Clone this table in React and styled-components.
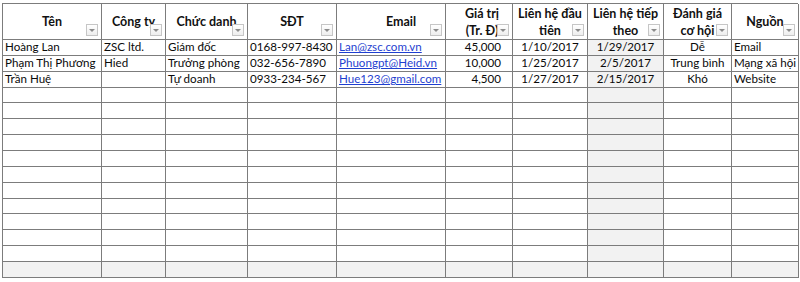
import React from 'react';
import styled, { createGlobalStyle } from 'styled-components';

const GlobalStyle = createGlobalStyle`
    body {
        margin: 0;
        background: #ffffff;
        font-family: Lato, "Open Sans", "Liberation Sans", sans-serif;
    }
`;

// --- layout ---

const COLS = [99, 64, 82, 89, 109, 67, 75, 76, 68, 67];

const Sheet = styled.div`
    display: grid;
    grid-template-columns: ${COLS.map((w) => `${w}px`).join(' ')};
    grid-template-rows: 36px repeat(15, 15.87px);
    margin: 3px 0 0 2px;
    width: 796px;
    border-left: 1px solid #7c7c7c;
    border-top: 1px solid #7c7c7c;
    box-sizing: border-box;
`;

const HeadCell = styled.div`
    position: relative;
    display: flex;
    flex-direction: column;
    align-items: center;
    justify-content: center;
    padding: 0 ${(p) => p.$pr || 0}px 0 ${(p) => p.$pl || 0}px;
    border-right: 1px solid #7c7c7c;
    border-bottom: 1px solid #7c7c7c;
    background: #ffffff;
    font-weight: 700;
    font-size: 12.5px;
    line-height: 17px;
    color: #111111;
    white-space: nowrap;
    overflow: hidden;
`;

const FilterButton = styled.span`
    position: absolute;
    right: 3px;
    bottom: 3px;
    width: 12px;
    height: 12px;
    box-sizing: border-box;
    border: 1px solid #c6c6c6;
    background: linear-gradient(#ffffff, #eeeeee);
    display: flex;
    align-items: center;
    justify-content: center;

    &::after {
        content: '';
        border-left: 3px solid transparent;
        border-right: 3px solid transparent;
        border-top: 3px solid #8c8c8c;
    }
`;

const Cell = styled.div`
    box-sizing: border-box;
    border-right: 1px solid #7c7c7c;
    border-bottom: 1px solid #7c7c7c;
    background: ${(p) => (p.$shade ? '#f2f2f2' : '#ffffff')};
    font-size: 11.6px;
    line-height: 14.5px;
    color: #0a0a0a;
    padding: 0 ${(p) => (p.$align === 'right' ? 11 : 2)}px 0 2px;
    white-space: nowrap;
    overflow: hidden;
    display: flex;
    align-items: flex-end;
    justify-content: ${(p) =>
        p.$align === 'right' ? 'flex-end' : p.$align === 'center' ? 'center' : 'flex-start'};
`;

const Link = styled.span`
    color: #1f3fd0;
    text-decoration: underline;
`;

// --- data ---

const headers = [
    { lines: ['Tên'] },
    { lines: ['Công ty'] },
    { lines: ['Chức danh'] },
    { lines: ['SĐT'] },
    { lines: ['Email'], pl: 20 },
    { lines: ['Giá trị', '(Tr. Đ)'], pl: 6 },
    { lines: ['Liên hệ đầu', 'tiên'] },
    { lines: ['Liên hệ tiếp', 'theo'] },
    { lines: ['Đánh giá', 'cơ hội'] },
    { lines: ['Nguồn'] },
];

const align = ['left', 'left', 'left', 'left', 'left', 'right', 'center', 'center', 'center', 'left'];

const rows = [
    ['Hoàng Lan', 'ZSC ltd.', 'Giám đốc', '0168-997-8430', 'Lan@zsc.com.vn', '45,000', '1/10/2017', '1/29/2017', 'Dễ', 'Email'],
    ['Phạm Thị Phương', 'Hied', 'Trưởng phòng', '032-656-7890', 'Phuongpt@Heid.vn', '10,000', '1/25/2017', '2/5/2017', 'Trung bình', 'Mạng xã hội'],
    ['Trần Huệ', '', 'Tự doanh', '0933-234-567', 'Hue123@gmail.com', '4,500', '1/27/2017', '2/15/2017', 'Khó', 'Website'],
];

const TOTAL_ROWS = 15;

export default function App() {
    const body = [];
    for (let r = 0; r < TOTAL_ROWS; r++) {
        const data = rows[r] || Array(10).fill('');
        const lastRow = r === TOTAL_ROWS - 1;
        data.forEach((val, c) => {
            body.push(
                <Cell key={`${r}-${c}`} $align={align[c]} $shade={lastRow || c === 7}>
                    {c === 4 && val ? <Link>{val}</Link> : val}
                </Cell>
            );
        });
    }

    return (
        <>
            <GlobalStyle />
            <Sheet>
                {headers.map((h, i) => (
                    <HeadCell key={i} $pl={h.pl} $pr={h.pr}>
                        {h.lines.map((l) => (
                            <span key={l}>{l}</span>
                        ))}
                        <FilterButton />
                    </HeadCell>
                ))}
                {body}
            </Sheet>
        </>
    );
}
